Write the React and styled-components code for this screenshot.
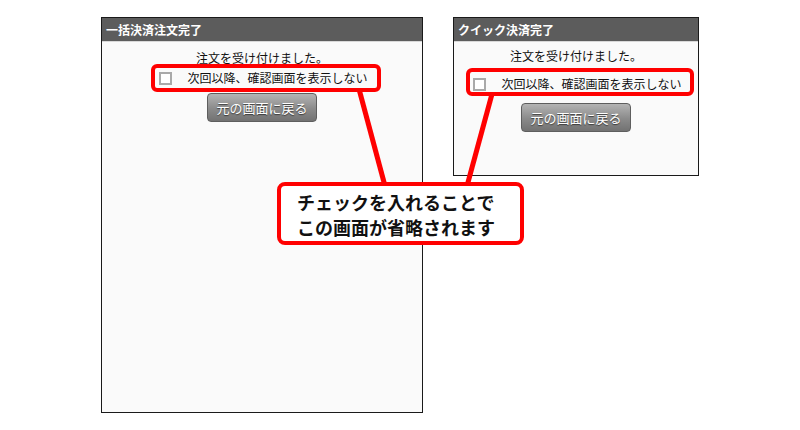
import styled, { createGlobalStyle } from "styled-components";

const GlobalStyle = createGlobalStyle`
  html, body {
    margin: 0;
    padding: 0;
    background: #ffffff;
  }
  body {
    font-family: "Noto Sans CJK JP", "Liberation Sans", sans-serif;
  }
`;

const panels = [
  {
    id: "bulk",
    title: "一括決済注文完了",
    width: 322,
    height: 396,
    spacing: { top: 8, row: 1, button: 4 },
  },
  {
    id: "quick",
    title: "クイック決済完了",
    width: 246,
    height: 159,
    spacing: { top: 6, row: 9, button: 8 },
  },
];

export default function App() {
  return (
    <>
      <GlobalStyle />
      <Page>
        {panels.map((p) => (
          <Panel key={p.id} $width={p.width} $height={p.height}>
            <PanelHeader>{p.title}</PanelHeader>
            <PanelBody>
              <Message $top={p.spacing.top}>注文を受け付けました。</Message>
              <CheckRow $top={p.spacing.row}>
                <CheckBox />
                <CheckLabel>次回以降、確認画面を表示しない</CheckLabel>
              </CheckRow>
              <BackButton $top={p.spacing.button}>元の画面に戻る</BackButton>
            </PanelBody>
          </Panel>
        ))}

        <Pointers width="800" height="430" viewBox="0 0 800 430">
          <line x1="359" y1="89" x2="385" y2="186" stroke="#ff0000" strokeWidth="5" />
          <line x1="492" y1="94" x2="467" y2="186" stroke="#ff0000" strokeWidth="5" />
        </Pointers>

        <Highlight $x={151} $y={64} $w={230} $h={28} />
        <Highlight $x={466} $y={68} $w={228} $h={28} />

        <Callout>
          <CalloutText>チェックを入れることで</CalloutText>
          <CalloutText>この画面が省略されます</CalloutText>
        </Callout>
      </Page>
    </>
  );
}

const Page = styled.div`
  position: relative;
  width: 800px;
  height: 430px;
  box-sizing: border-box;
  padding: 17px 0 0 101px;
  display: flex;
  align-items: flex-start;
  gap: 30px;
  overflow: hidden;
`;

const Panel = styled.section`
  width: ${({ $width }) => $width}px;
  height: ${({ $height }) => $height}px;
  box-sizing: border-box;
  border: 1px solid #1a1a1a;
  background: #fafafa;
  display: flex;
  flex-direction: column;
`;

const PanelHeader = styled.div`
  height: 23px;
  background: #5c5c5c;
  color: #ffffff;
  font-weight: bold;
  font-size: 12px;
  line-height: 23px;
  padding-left: 4px;
  border-bottom: 1px solid #d8d8d8;
`;

const PanelBody = styled.div`
  display: flex;
  flex-direction: column;
  align-items: center;
`;

const Message = styled.div`
  margin-top: ${({ $top }) => $top}px;
  font-size: 12px;
  line-height: 16px;
  color: #111111;
`;

const CheckRow = styled.label`
  margin-top: ${({ $top }) => $top}px;
  height: 22px;
  display: flex;
  align-items: center;
  gap: 15px;
  padding-left: 3px;
`;

const CheckBox = styled.span`
  width: 13px;
  height: 13px;
  box-sizing: border-box;
  border: 2px solid #a9a9a9;
  background: #ffffff;
`;

const CheckLabel = styled.span`
  font-size: 12px;
  line-height: 16px;
  color: #111111;
`;

const BackButton = styled.button`
  margin-top: ${({ $top }) => $top}px;
  width: 110px;
  height: 29px;
  border: 1px solid #5e5e5e;
  border-radius: 4px;
  background: linear-gradient(#b4b4b4, #8a8a8a 55%, #727272);
  color: #ffffff;
  font-family: "Noto Sans CJK JP", "Liberation Sans", sans-serif;
  font-size: 13px;
  text-shadow: 0 1px 1px #3a3a3a;
  padding: 0;
`;

const Pointers = styled.svg`
  position: absolute;
  left: 0;
  top: 0;
  pointer-events: none;
`;

const Highlight = styled.div`
  position: absolute;
  left: ${({ $x }) => $x}px;
  top: ${({ $y }) => $y}px;
  width: ${({ $w }) => $w}px;
  height: ${({ $h }) => $h}px;
  box-sizing: border-box;
  border: 4px solid #ff0000;
  border-radius: 6px;
`;

const Callout = styled.div`
  position: absolute;
  left: 277px;
  top: 182px;
  width: 247px;
  height: 63px;
  box-sizing: border-box;
  border: 4px solid #ff0000;
  border-radius: 8px;
  background: #ffffff;
  padding: 4px 0 0 16px;
  display: flex;
  flex-direction: column;
`;

const CalloutText = styled.div`
  font-size: 18px;
  font-weight: bold;
  line-height: 25px;
  color: #111111;
  white-space: nowrap;
`;
